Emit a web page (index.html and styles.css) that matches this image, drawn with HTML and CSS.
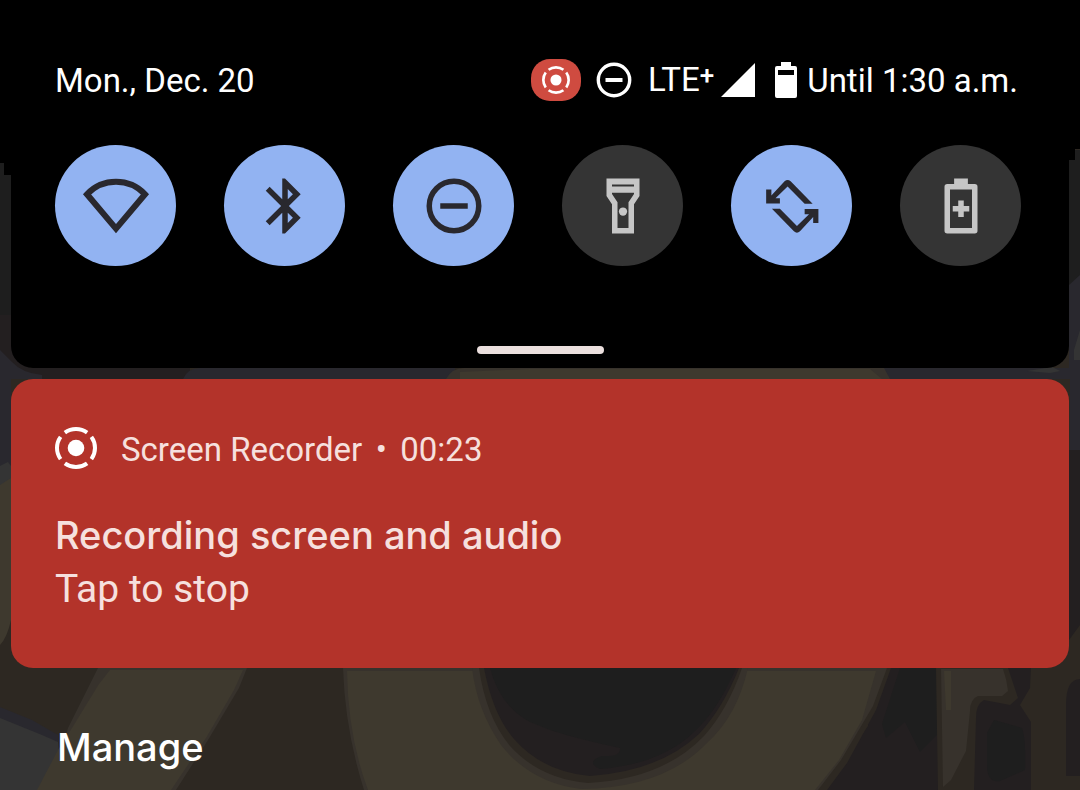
FILE: index.html
```html
<!DOCTYPE html>
<html lang="en">
<head>
<meta charset="utf-8">
<meta name="viewport" content="width=device-width, initial-scale=1">
<title>Notification shade</title>
<link rel="stylesheet" href="styles.css">
</head>
<body>
<svg class="symbols" aria-hidden="true">
  <symbol id="record" viewBox="0 0 42 42">
    <circle cx="21" cy="21" r="8.3" fill="currentColor"/>
    <circle cx="21" cy="21" r="19" fill="none" stroke="currentColor" stroke-width="4" pathLength="360" stroke-dasharray="72 18" stroke-dashoffset="36"/>
  </symbol>
</svg>

<svg class="wallpaper" viewBox="0 0 1080 790" preserveAspectRatio="none" aria-hidden="true">
  <rect width="1080" height="790" fill="#2d2822"/>
  <path fill="#1e1e1e" d="M0 150H1080V320H0z"/>
  <path fill="#231f20" d="M0 315H11L30 368H190V379H0zM1069 450H1080V625L1069 640z"/>
  <path fill="#29282e" d="M0 350L12 362Q22 373 42 375V379H11V466H0zM183 379Q188 368 200 368H455V379zM880 368H1069V285L1080 275V450H1070V379H880z"/>
  <path fill="#343434" d="M0 466L8 462L11 466V485H0zM1027 371L1052 367L1060 371L1050 373L1027 371zM1074 350L1080 330V360H1074z"/>
  <path fill="#37322c" d="M446 379Q452 368 464 368H884L890 379z"/>
  <path fill="#3e392e" d="M460 372L530 369H870L882 379H460zM0 485L11 478V620Q7 638 0 645z"/>
  <path fill="#000" d="M0 0H1080V149H1075V160H1069V340H11V175H4V163H0z"/>

  <path fill="#29282e" d="M0 707L32 720L58 735V760L0 735z"/>
  <path fill="#343434" d="M0 718L42 735L58 742L60 766L38 790H0z"/>
  <path fill="#37322c" d="M98 668H247L239 688L208 740L176 790H50L68 728z"/>
  <path fill="#3e392e" d="M110 670H243L234 690L206 738L171 790H37L58 750L72 728L99 684z"/>

  <path fill="#231f20" d="M870 668H1032V790H823L868 726z"/>
  <path fill="#1e1e1e" d="M900 668H937V735L920 752L905 722L886 738L882 724z"/>
  <path fill="#2d2822" d="M735 668H891L876 710L847 763L827 790H735z"/>
  <path fill="#37322c" d="M343 668H887L873 706L841 760L818 790H364Q345 730 343 668z"/>
  <path fill="#3e392e" d="M347 671H876L862 720L839 760L815 790H368Q348 737 347 671z"/>
  <path fill="#37322c" d="M472 668H748Q737 716 707 743Q664 788 581 789Q531 783 501 745Q477 710 472 668z"/>
  <path fill="#2d2822" d="M479 668H742Q728 709 704 736Q663 779 588 783Q540 779 510 746Q486 717 479 668z"/>
  <path fill="#231f20" d="M484 668H739Q723 708 699 734Q660 771 590 776Q543 772 514 739Q493 715 484 668z"/>
  <path fill="#1e1e1e" d="M490 668H736Q718 710 694 732Q661 764 600 769Q585 762 602 756Q621 757 620 748Q578 739 550 730L530 722Q500 706 490 668z"/>

  <path fill="#2d2822" d="M936 668H1008L1018 698L1010 705L984 700Q976 704 976 718L974 790H938z"/>
  <path fill="#37322c" d="M941 669H1003Q1007 680 1008 691L1002 696H978Q970 699 970 711L966 751L951 780L943 787z"/>
  <path fill="#3e392e" d="M944 671H951V710H946z"/>
  <path fill="#2d2822" d="M1031 668H1080V790H1031V722L1020 705L1030 688z"/>
  <path fill="#1e1e1e" d="M994 720L1022 728Q1026 738 1025 770L1000 781Q987 783 987 765V733z"/>
  <path fill="#231f20" d="M1080 679Q1066 679 1066 705V776H1080z"/>
</svg>

<main class="shade">
  <section class="quick" aria-label="Quick settings">
    <header class="status">
      <time class="date">Mon., Dec. 20</time>
      <div class="indicators">
        <span class="pill"><svg class="pill-icon" role="img" aria-label="Recording"><use href="#record"/></svg></span>
        <svg class="silent" viewBox="0 0 36 36" role="img" aria-label="Do not disturb"><circle cx="18" cy="18" r="15.7" fill="none" stroke="currentColor" stroke-width="3.4"/><path fill="currentColor" d="M9.5 16h17v4h-17z"/></svg>
        <span class="network">LTE<span class="plus">+</span></span>
        <svg class="signal" viewBox="0 0 34 34" role="img" aria-label="Full signal"><path fill="currentColor" d="M34 0V34H0z"/></svg>
        <svg class="battery" viewBox="0 0 22 36" role="img" aria-label="Battery"><path fill="currentColor" fill-rule="evenodd" d="M6 0H16V4H20Q22 4 22 6V34Q22 36 20 36H2Q0 36 0 34V6Q0 4 2 4H6zM3 8V13H19V8z"/></svg>
        <span class="until">Until 1:30 a.m.</span>
      </div>
    </header>
    <div class="tiles">
      <button class="tile on" type="button" aria-label="Wi-Fi" aria-pressed="true"><svg class="wifi" viewBox="0 0 72 66"><path fill="none" stroke="currentColor" stroke-width="6" d="M7 21.300A40 40 0 0 1 65 21.300L36 55.700z"/></svg></button>
      <button class="tile on" type="button" aria-label="Bluetooth" aria-pressed="true"><svg class="glyph" viewBox="0 0 24 24"><path fill="currentColor" d="M17.710 7.710L12 2h-1v7.590L6.410 5 5 6.410 10.590 12 5 17.590 6.410 19 11 14.410V22h1l5.710-5.710-4.300-4.290zM13 5.830l1.880 1.880L13 9.590zM14.880 16.290L13 18.170v-3.760z"/></svg></button>
      <button class="tile on" type="button" aria-label="Do not disturb" aria-pressed="true"><svg class="glyph" viewBox="0 0 24 24"><circle cx="12" cy="12" r="9" fill="none" stroke="currentColor" stroke-width="2"/><path fill="currentColor" d="M7 11h10v2H7z"/></svg></button>
      <button class="tile" type="button" aria-label="Flashlight" aria-pressed="false"><svg class="glyph" viewBox="0 0 24 24"><path fill="currentColor" fill-rule="evenodd" d="M18 2H6v6.400l2 3V22h8V11.400l2-3zM16 4.200v.7H8v-.7zM14 10.600V20h-4v-9.400L8 7.600V7.200h8v.4z"/><circle cx="12" cy="14" r="1.500" fill="currentColor"/></svg></button>
      <button class="tile on" type="button" aria-label="Auto-rotate" aria-pressed="true"><svg class="glyph" viewBox="0 0 24 24"><g fill="currentColor"><path id="turn" d="M2.600 6h1.900v2.200L9.300 3Q10.400 2 11.500 3L19.500 11.200H16.600L10.400 4.900L6 9.200H7.600V11.100H2.600z"/><use href="#turn" transform="rotate(180 12.100 12.100)"/></g></svg></button>
      <button class="tile" type="button" aria-label="Battery Saver" aria-pressed="false"><svg class="glyph" viewBox="0 0 24 24"><path fill="currentColor" fill-rule="evenodd" d="M9.500 2h5v2H17q1 0 1 1v16q0 1-1 1H7q-1 0-1-1V5q0-1 1-1h2.500zM8 6v14h8V6z"/><path fill="currentColor" d="M11 10h2v2h2v2h-2v2h-2v-2H9v-2h2z"/></svg></button>
    </div>
    <div class="handle"></div>
  </section>

  <article class="card">
    <header class="source">
      <svg class="source-icon" aria-hidden="true"><use href="#record"/></svg>
      <span class="app">Screen Recorder</span>
      <span class="dot">•</span>
      <time>00:23</time>
    </header>
    <h1 class="title">Recording screen and audio</h1>
    <p class="hint">Tap to stop</p>
  </article>

  <button class="manage" type="button">Manage</button>
</main>
</body>
</html>
```
FILE: styles.css
```css
* {
  box-sizing: border-box;
}

body {
  margin: 0;
  position: relative;
  min-height: 100vh;
  overflow-x: hidden;
  background: #2d2822;
  color: #fff;
  font-family: Roboto, "Noto Sans", sans-serif;
}

button {
  border: 0;
  padding: 0;
  font: inherit;
  color: inherit;
  background: none;
}

svg {
  display: block;
  flex: none;
}

.symbols {
  position: absolute;
  width: 0;
  height: 0;
}

.wallpaper {
  position: absolute;
  inset: 0;
  width: 100%;
  height: 100%;
}

.shade {
  position: relative;
  display: flex;
  flex-direction: column;
  gap: 11px;
  padding: 0 11px;
}

.quick {
  display: flex;
  flex-direction: column;
  padding: 56px 48px 14px 44px;
  background: #000;
  border-radius: 0 0 22px 22px;
}

.status {
  display: flex;
  justify-content: space-between;
  align-items: center;
  height: 48px;
  padding-right: 3px;
  font-size: 33px;
  line-height: 46px;
  white-space: nowrap;
}

.date,
.until {
  padding-top: 2px;
}

.indicators {
  display: flex;
  align-items: center;
}

.pill {
  display: flex;
  align-items: center;
  justify-content: center;
  width: 50px;
  height: 42px;
  margin-right: 15px;
  border-radius: 19px;
  background: #cf4b40;
}

.pill-icon {
  width: 28px;
  height: 28px;
}

.silent {
  width: 36px;
  height: 36px;
  margin-right: 16px;
}

.network {
  display: flex;
  margin-right: 7px;
  font-family: "Liberation Sans Narrow", Roboto, sans-serif;
}

.plus {
  font: 500 26px/36px Roboto, sans-serif;
}

.signal {
  width: 34px;
  height: 34px;
  margin-right: 20px;
}

.battery {
  width: 22px;
  height: 36px;
  margin-right: 10px;
}

.tiles {
  display: flex;
  justify-content: space-between;
  margin-top: 41px;
}

.tile {
  display: flex;
  align-items: center;
  justify-content: center;
  width: 121px;
  height: 121px;
  border-radius: 50%;
  background: #343434;
  color: #c6c6c6;
}

.tile.on {
  background: #92b3f2;
  color: #29282e;
}

.glyph {
  width: 66px;
  height: 66px;
}

.wifi {
  width: 72px;
  height: 66px;
}

.handle {
  align-self: center;
  width: 127px;
  height: 8px;
  margin: 80px 0 0 4px;
  border-radius: 4px;
  background: #ebdfde;
}

.card {
  padding: 47px 44px 52px;
  border-radius: 22px;
  background: #b3332a;
  color: #f6e0de;
}

.source {
  display: flex;
  align-items: center;
  height: 44px;
  font-size: 33px;
  line-height: 44px;
}

.source > :not(svg) {
  padding-top: 3px;
}

.source-icon {
  width: 42px;
  height: 42px;
  margin-right: 24px;
  color: #fff;
}

.dot {
  width: 38px;
  text-align: center;
}

.title {
  margin: 38px 0 0;
  font: 500 38px/54px Inter, Roboto, sans-serif;
}

.hint {
  margin: 0;
  font-size: 39px;
  line-height: 54px;
}

.manage {
  align-self: flex-start;
  margin: 41px 0 16px 46px;
  font: 500 38px/54px Inter, Roboto, sans-serif;
}
```
